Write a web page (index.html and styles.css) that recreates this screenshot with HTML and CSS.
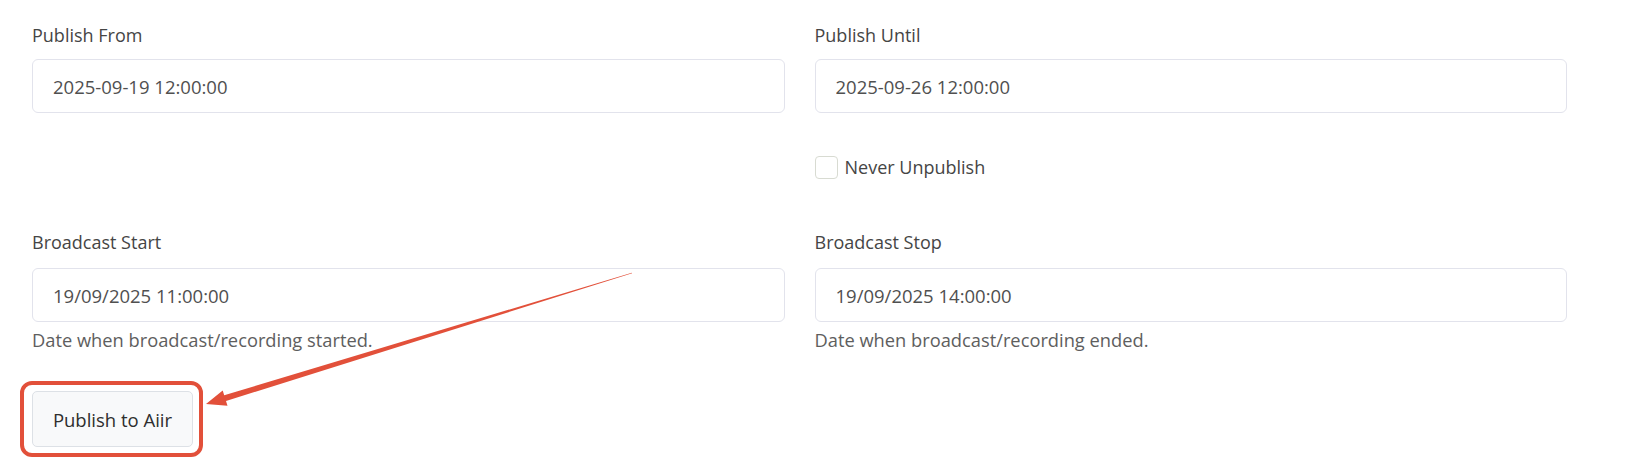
FILE: index.html
```html
<!DOCTYPE html>
<html lang="en">
<head>
  <meta charset="UTF-8" />
  <title>Publishing</title>
  <link rel="stylesheet" href="styles.css">
</head>
<body>
  <form class="publish-form">
    <div class="form-row">
      <div class="field">
        <label class="field-label">Publish From</label>
        <input class="field-input" type="text" value="2025-09-19 12:00:00">
      </div>
      <div class="field">
        <label class="field-label">Publish Until</label>
        <input class="field-input" type="text" value="2025-09-26 12:00:00">
        <label class="check">
          <span class="check-box"></span>
          <span>Never Unpublish</span>
        </label>
      </div>
    </div>

    <div class="form-row row-broadcast">
      <div class="field">
        <label class="field-label">Broadcast Start</label>
        <input class="field-input" type="text" value="19/09/2025 11:00:00">
        <div class="help">Date when broadcast/recording started.</div>
      </div>
      <div class="field">
        <label class="field-label">Broadcast Stop</label>
        <input class="field-input" type="text" value="19/09/2025 14:00:00">
        <div class="help">Date when broadcast/recording ended.</div>
      </div>
    </div>

    <div class="actions">
      <button type="button" class="btn">Publish to Aiir</button>
    </div>
  </form>

  <!-- annotation overlay -->
  <svg class="annotation" width="1632" height="476" viewBox="0 0 1632 476">
    <rect x="22" y="383" width="179" height="72" rx="10" fill="none" stroke="#e2503a" stroke-width="4"/>
    <polygon fill="#e2503a" points="632.1,273.3 631.9,272.7 224.2,395.2 222.7,390.5 206,404 227.5,405.7 226,401"/>
  </svg>
</body>
</html>
```

FILE: styles.css
```css
* {
  box-sizing: border-box;
}

html, body {
  height: 100%;
}

body {
  margin: 0;
  background: #ffffff;
  font-family: 'Open Sans', 'Noto Sans', sans-serif;
  color: #4a4a4a;
  position: relative;
}

.publish-form {
  padding: 21px 65px 0 32px;
}

.form-row {
  display: grid;
  grid-template-columns: 1fr 1fr;
  column-gap: 30px;
}

.row-broadcast {
  margin-top: 49px;
}

.field {
  display: flex;
  flex-direction: column;
}

.field-label {
  font-size: 18px;
  line-height: 28px;
  color: #454545;
  margin-bottom: 10px;
}

.row-broadcast .field-label {
  margin-bottom: 12px;
}

.field-input {
  height: 54px;
  border: 1px solid #e2e3ec;
  border-radius: 6px;
  padding: 0 20px;
  font-family: inherit;
  font-size: 18.5px;
  color: #505050;
  background: #fff;
  outline: none;
}

.check {
  display: flex;
  align-items: center;
  gap: 7px;
  margin-top: 42px;
  font-size: 18px;
  color: #454545;
}

.check-box {
  width: 23px;
  height: 23px;
  border: 1.5px solid #d8dbd2;
  border-radius: 4px;
  background: #fff;
}

.help {
  margin-top: 5px;
  font-size: 18.3px;
  line-height: 26px;
  color: #5e5e5e;
}

.actions {
  margin-top: 38px;
}

.btn {
  height: 56px;
  padding: 0;
  width: 161px;
  white-space: nowrap;
  background: #f8f9fa;
  border: 1px solid #dde1e6;
  border-radius: 5px;
  font-family: inherit;
  font-size: 18.5px;
  color: #2e2e2e;
}

.annotation {
  position: absolute;
  top: 0;
  left: 0;
  pointer-events: none;
}
```
